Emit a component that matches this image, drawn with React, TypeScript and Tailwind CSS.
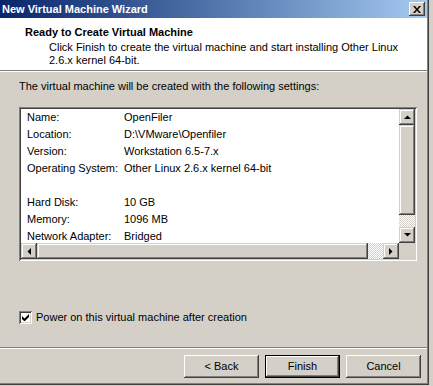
import React from 'react';

const font = "font-['Tahoma','Liberation_Sans',Arial,sans-serif]";
const raised =
  'bg-[#d4d0c8] shadow-[inset_-1px_-1px_#404040,inset_1px_1px_#ffffff,inset_-2px_-2px_#808080,inset_2px_2px_#d4d0c8]';
const sbRaised =
  'bg-[#d4d0c8] shadow-[inset_-1px_-1px_#404040,inset_1px_1px_#d4d0c8,inset_-2px_-2px_#808080,inset_2px_2px_#ffffff]';
const checker =
  'bg-[conic-gradient(#ffffff_25%,#d4d0c8_0_50%,#ffffff_0_75%,#d4d0c8_0)] bg-[length:2px_2px]';

const rows: [string, string][] = [
  ['Name:', 'OpenFiler'],
  ['Location:', 'D:\\VMware\\Openfiler'],
  ['Version:', 'Workstation 6.5-7.x'],
  ['Operating System:', 'Other Linux 2.6.x kernel 64-bit'],
  ['', ''],
  ['Hard Disk:', '10 GB'],
  ['Memory:', '1096 MB'],
  ['Network Adapter:', 'Bridged'],
];

// tiny black arrow for scrollbar buttons
const Arrow = ({ dir }: { dir: 'up' | 'down' | 'left' | 'right' }) => {
  const pts = {
    up: '0,4 7,4 3.5,0.5',
    down: '0,0 7,0 3.5,3.5',
    left: '4,0 4,7 0.5,3.5',
    right: '0,0 0,7 3.5,3.5',
  }[dir];
  const vertical = dir === 'up' || dir === 'down';
  return (
    <svg width={vertical ? 7 : 4} height={vertical ? 4 : 7} viewBox={vertical ? '0 0 7 4' : '0 0 4 7'}>
      <polygon points={pts} fill="#000" />
    </svg>
  );
};

const SbButton = ({ dir }: { dir: 'up' | 'down' | 'left' | 'right' }) => (
  <div className={`w-[16px] h-[16px] flex items-center justify-center ${sbRaised}`}>
    <Arrow dir={dir} />
  </div>
);

const Button = ({ label, primary }: { label: string; primary?: boolean }) => (
  <div className={`w-[75px] h-[23px] ${primary ? 'border border-black' : ''}`}>
    <div className={`w-full h-full flex items-center justify-center text-[11px] text-black ${raised}`}>
      {label}
    </div>
  </div>
);

export default function App() {
  return (
    <div className={`w-[433px] h-[386px] bg-[#d4d0c8] overflow-hidden ${font}`}>
      <div className="w-[429px] h-[385px] flex flex-col bg-[#d4d0c8] shadow-[inset_-1px_-1px_#404040,inset_-2px_-2px_#808080]">
        {/* title bar */}
        <div className="h-[18px] w-[427px] flex items-center justify-between bg-gradient-to-r from-[#0a246a] to-[#a6caf0]">
          <span className="pl-[2px] text-[11px] leading-[13px] font-bold text-white">New Virtual Machine Wizard</span>
          <div className={`mr-[2px] w-[16px] h-[14px] flex items-center justify-center ${raised}`}>
            <svg width="8" height="7" viewBox="0 0 8 7">
              <path d="M0 0h2l2 2.5L6 0h2L5 3.5 8 7H6L4 4.5 2 7H0l3-3.5z" fill="#000" />
            </svg>
          </div>
        </div>

        {/* header */}
        <div className="w-[427px] h-[52px] bg-white pt-[8px] text-[11px] leading-[13px] text-black">
          <div className="pl-[25px] font-bold">Ready to Create Virtual Machine</div>
          <div className="pl-[49px] pt-[2px] w-[400px]">
            Click Finish to create the virtual machine and start installing Other Linux 2.6.x kernel 64-bit.
          </div>
        </div>
        <div className="w-[427px] h-px bg-[#808080]" />
        <div className="w-[427px] h-px bg-white" />

        {/* body */}
        <div className="flex flex-col pl-[19px] text-[11px] leading-[13px] text-black">
          <div className="mt-[8px]">The virtual machine will be created with the following settings:</div>

          <div className="mt-[14px] w-[398px] h-[154px] p-[2px] bg-white shadow-[inset_1px_1px_#808080,inset_-1px_-1px_#ffffff,inset_2px_2px_#404040,inset_-2px_-2px_#d4d0c8]">
            <div className="grid grid-cols-[378px_16px] grid-rows-[134px_16px]">
              <div className="overflow-hidden bg-white">
                {rows.map(([k, v], i) => (
                  <div key={i} className="h-[17px] leading-[17px] flex pl-[6px]">
                    <span className="w-[97px] shrink-0">{k}</span>
                    <span>{v}</span>
                  </div>
                ))}
              </div>
              <div className="flex flex-col">
                <SbButton dir="up" />
                <div className={`h-[90px] ${sbRaised}`} />
                <div className={`flex-1 ${checker}`} />
                <SbButton dir="down" />
              </div>
              <div className="flex">
                <SbButton dir="left" />
                <div className={`w-[331px] ${sbRaised}`} />
                <div className={`flex-1 ${checker}`} />
                <SbButton dir="right" />
              </div>
              <div className="bg-[#d4d0c8]" />
            </div>
          </div>

          <label className="mt-[50px] flex items-center gap-[4px]">
            <div className="w-[13px] h-[13px] bg-white flex items-center justify-center shadow-[inset_1px_1px_#808080,inset_-1px_-1px_#ffffff,inset_2px_2px_#404040,inset_-2px_-2px_#d4d0c8]">
              <svg width="7" height="7" viewBox="0 0 7 7">
                <path d="M0 2v3l2 2h1l4-4V0L2.5 4.5z" fill="#000" />
              </svg>
            </div>
            <span>Power on this virtual machine after creation</span>
          </label>
        </div>

        <div className="mt-[23px] w-[427px] h-px bg-[#808080]" />
        <div className="w-[427px] h-px bg-white" />

        <div className="mt-[6px] w-[427px] flex justify-end gap-[6px] pr-[6px]">
          <Button label="< Back" />
          <Button label="Finish" primary />
          <Button label="Cancel" />
        </div>
      </div>
    </div>
  );
}
